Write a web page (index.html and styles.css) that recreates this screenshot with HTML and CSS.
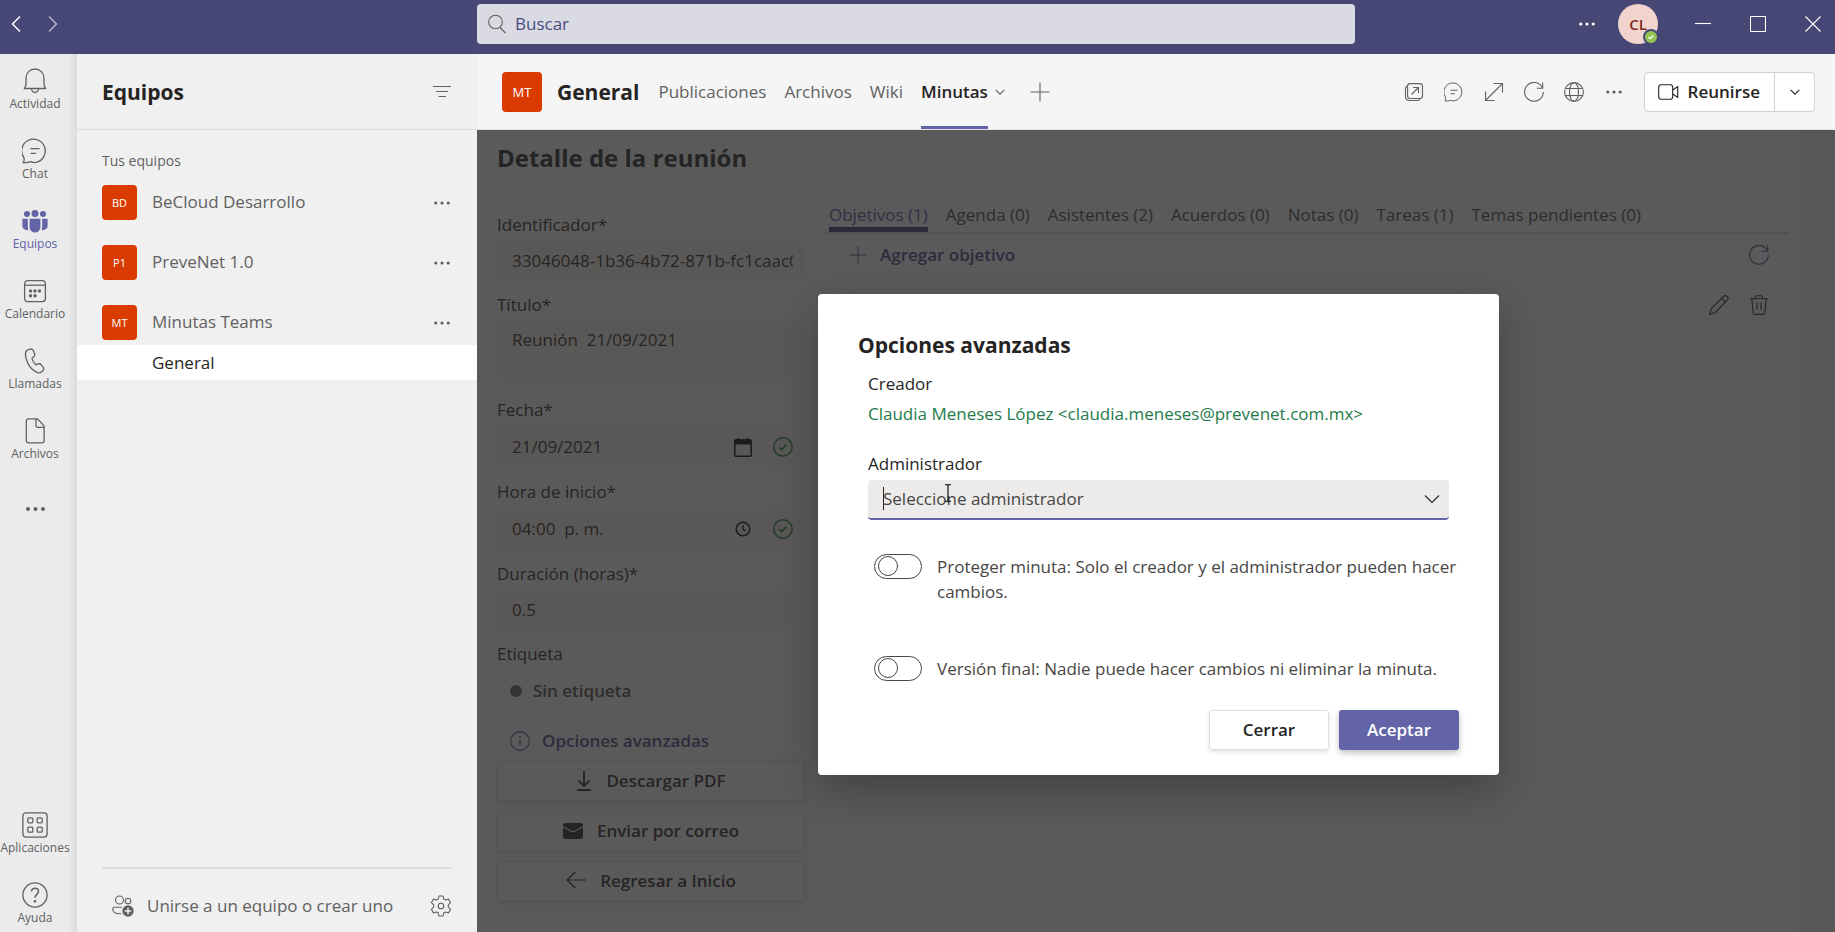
FILE: index.html
```html
<!DOCTYPE html>
<html lang="es">
<head>
<meta charset="utf-8">
<title>Minutas Teams</title>
<link rel="stylesheet" href="styles.css">
</head>
<body>
<svg class="sprite" aria-hidden="true">
  <symbol id="i-dots" viewBox="0 0 20 20"><g fill="currentColor" stroke="none"><circle cx="3.8" cy="10" r="1.6"/><circle cx="10" cy="10" r="1.6"/><circle cx="16.2" cy="10" r="1.6"/></g></symbol>
  <symbol id="i-chat" viewBox="0 0 26 26"><path d="M1.2 24.6c.9-1.300 1.100-3 .9-4.500A11.800 11.800 0 1 1 13.200 24.600a12 12 0 0 1-4.500-.9c-2.200.9-4.600 1.200-7.500.9zM8.500 10.700h9M8.500 15.300h5.500"/></symbol>
  <symbol id="i-refresh" viewBox="0 0 20 20"><path d="M18.600 6A9.400 9.400 0 1 0 19.400 10M18.700.5v5.700h-6"/></symbol>
  <symbol id="i-plus" viewBox="0 0 20 20"><path d="M10 .5v19M.5 10h19"/></symbol>
  <symbol id="i-chevron" viewBox="0 0 16 16"><path d="M1 4.500l7 7 7-7"/></symbol>
  <symbol id="i-check" viewBox="0 0 20 20"><circle cx="10" cy="10" r="9.200"/><path d="M6.300 10.300l2.500 2.300 4.700-5" stroke-width="1.800"/></symbol>
</svg>

<header class="titlebar">
  <nav class="history" aria-label="Historial">
    <button class="icon-btn" aria-label="Atrás"><svg class="ic" width="10" height="18" viewBox="0 0 10 18"><path d="M9 1.500L1.500 9 9 16.500" stroke-width="1.500"/></svg></button>
    <button class="icon-btn dim" aria-label="Adelante"><svg class="ic" width="10" height="18" viewBox="0 0 10 18"><path d="M1 1.500L8.500 9 1 16.500" stroke-width="1.300"/></svg></button>
  </nav>
  <label class="search">
    <svg class="ic" width="18" height="20" viewBox="0 0 18 20"><circle cx="7.500" cy="8" r="6.800"/><path d="M12 13.500l5.500 5.500"/></svg>
    <input type="text" placeholder="Buscar" aria-label="Buscar">
  </label>
  <div class="window-tools">
    <button class="icon-btn" aria-label="Más"><svg class="ic" width="20" height="20"><use href="#i-dots"/></svg></button>
    <div class="user">CL<span class="presence"><svg class="ic" width="8" height="8" viewBox="0 0 8 8"><path d="M1.500 4.200l1.700 1.500 3.200-3.200" stroke-width="1.300"/></svg></span></div>
    <button class="icon-btn" aria-label="Minimizar"><svg class="ic" width="16" height="16" viewBox="0 0 16 16"><path d="M0 7.500h16"/></svg></button>
    <button class="icon-btn" aria-label="Maximizar"><svg class="ic" width="16" height="16" viewBox="0 0 16 16"><path d="M.5.5h15v15H.5z"/></svg></button>
    <button class="icon-btn" aria-label="Cerrar ventana"><svg class="ic" width="16" height="16" viewBox="0 0 16 16"><path d="M.5.5l15 15M15.500.5l-15 15"/></svg></button>
  </div>
</header>

<div class="shell">
  <nav class="rail" aria-label="Aplicaciones">
    <a class="rail-item" href="#"><svg class="ic" width="26" height="26" viewBox="0 0 26 26"><path d="M2.500 20.500l1.500-3.500V10a9 9 0 0 1 18 0v7l1.500 3.500zM9.500 20.800a3.500 3.500 0 0 0 7 0"/></svg><span>Actividad</span></a>
    <a class="rail-item" href="#"><svg class="ic" width="26" height="26"><use href="#i-chat"/></svg><span>Chat</span></a>
    <a class="rail-item active" href="#"><svg class="ic" width="26" height="26" viewBox="0 0 26 26"><g fill="currentColor" stroke="none"><circle cx="13" cy="5.600" r="3.500"/><circle cx="5" cy="6" r="3"/><circle cx="21" cy="6" r="3"/><path d="M7.600 10.800h10.800v8.400a5.400 5.400 0 0 1-10.800 0z"/><path d="M.4 10.800h5.400v8c0 1.300.2 2.300.8 3.300C3 22.500.4 20.800.4 18zM25.600 10.800h-5.400v8c0 1.300-.2 2.300-.8 3.300 3.600.4 6.200-1.300 6.200-4.100z"/></g></svg><span>Equipos</span></a>
    <a class="rail-item" href="#"><svg class="ic" width="26" height="26" viewBox="0 0 26 26"><rect x="2.600" y="2.600" width="20.800" height="21" rx="3"/><path d="M2.600 7.200h20.800"/><g fill="currentColor" stroke="none"><circle cx="8.500" cy="13" r="1.700"/><circle cx="13" cy="13" r="1.700"/><circle cx="17.500" cy="13" r="1.700"/><circle cx="8.500" cy="17.700" r="1.700"/><circle cx="13" cy="17.700" r="1.700"/></g></svg><span>Calendario</span></a>
    <a class="rail-item" href="#"><svg class="ic" width="26" height="26" viewBox="0 0 26 26"><path d="M6.500 1.600l2-.5c1.300-.3 2.300.3 2.800 1.500l1.300 3.200c.4 1.100.1 2-.7 2.700l-2 1.900c.7 2.300 2 4.500 3.900 6.300l2.600-.8c1-.3 2 0 2.700.8l2.200 2.700c.8 1 .6 2.200-.3 3.100l-1.300 1.200c-1.300 1.200-3.300 1.500-5 .6C9.500 21.800 5.500 16.500 4 9.800 3 6 3.500 2.500 6.500 1.600z"/></svg><span>Llamadas</span></a>
    <a class="rail-item" href="#"><svg class="ic" width="26" height="26" viewBox="0 0 26 26"><path d="M6.500.9h9l6.600 7v14.600c0 1.500-.8 2.300-2.200 2.300H6.500c-1.400 0-2.200-.8-2.200-2.300V3.200C4.300 1.700 5.100.9 6.500.9zM14 1v6.800c0 1 .6 1.600 1.600 1.600H22"/></svg><span>Archivos</span></a>
    <a class="rail-item" href="#" aria-label="Más aplicaciones"><svg class="ic" width="25" height="42" viewBox="0 0 25 42"><g fill="currentColor" stroke="none"><circle cx="5" cy="21" r="2"/><circle cx="12.500" cy="21" r="2"/><circle cx="20" cy="21" r="2"/></g></svg></a>
    <a class="rail-item rail-bottom" href="#"><svg class="ic" width="26" height="26" viewBox="0 0 26 26"><rect x=".9" y=".9" width="24.200" height="24.200" rx="3"/><rect x="5.800" y="5.800" width="5" height="5" rx="1"/><rect x="15.200" y="5.800" width="5" height="5" rx="1"/><rect x="5.800" y="15.200" width="5" height="5" rx="1"/><rect x="15.200" y="15.200" width="5" height="5" rx="1"/></svg><span>Aplicaciones</span></a>
    <a class="rail-item" href="#"><svg class="ic" width="26" height="26" viewBox="0 0 26 26"><circle cx="13" cy="13" r="12.100"/><path d="M9.500 9.600c0-2 1.500-3.400 3.500-3.400s3.500 1.400 3.500 3.300c0 2.700-3.500 3.200-3.500 6.300" stroke-width="1.500"/><circle cx="13" cy="19.300" r="1.300" fill="currentColor" stroke="none"/></svg><span>Ayuda</span></a>
  </nav>

  <aside class="sidebar">
    <div class="sidebar-head">
      <h1>Equipos</h1>
      <button class="icon-btn" aria-label="Filtrar"><svg class="ic" width="18" height="14" viewBox="0 0 18 14"><path d="M0 1.500h18M3 6.500h12M5.500 11.500h7.500" stroke-width="1.200"/></svg></button>
    </div>
    <div class="sidebar-body">
      <p class="caption">Tus equipos</p>
      <div class="team"><span class="avatar">BD</span><span class="team-name">BeCloud Desarrollo</span><button class="icon-btn" aria-label="Más opciones"><svg class="ic" width="20" height="20"><use href="#i-dots"/></svg></button></div>
      <div class="team"><span class="avatar">P1</span><span class="team-name">PreveNet 1.0</span><button class="icon-btn" aria-label="Más opciones"><svg class="ic" width="20" height="20"><use href="#i-dots"/></svg></button></div>
      <div class="team"><span class="avatar">MT</span><span class="team-name">Minutas Teams</span><button class="icon-btn" aria-label="Más opciones"><svg class="ic" width="20" height="20"><use href="#i-dots"/></svg></button></div>
      <a class="channel" href="#">General</a>
    </div>
    <div class="sidebar-foot">
      <button class="join"><svg class="ic" width="22" height="22" viewBox="0 0 22 22"><circle cx="7.500" cy="5" r="4"/><circle cx="16" cy="6" r="2.800"/><path d="M9.500 18.800H8c-4.500 0-7.300-1.500-7.300-4.500 0-1.300.7-2 2-2h7"/><circle cx="16" cy="16" r="5.700" fill="currentColor" stroke="none"/><path d="M16 12.800v6.400M12.800 16h6.400" stroke="#f0f0f0" stroke-width="1.400"/></svg><span>Unirse a un equipo o crear uno</span></button>
      <button class="icon-btn" aria-label="Configuración"><svg class="ic" width="22" height="22" viewBox="0 0 22 22"><circle cx="11" cy="11" r="2.800"/><path d="M8.900 1h4.200l.6 3 1.900 1.100 2.900-1 2.100 3.600-2.300 2.100v2.400l2.300 2.100-2.100 3.600-2.900-1-1.900 1.100-.6 3H8.900l-.6-3-1.900-1.100-2.900 1-2.100-3.600 2.300-2.100V9.800L1.400 7.700l2.100-3.600 2.900 1L8.300 4z" stroke-linejoin="round"/></svg></button>
    </div>
  </aside>

  <main class="main">
    <div class="channel-head">
      <span class="avatar large">MT</span>
      <h2>General</h2>
      <nav class="channel-tabs">
        <a href="#">Publicaciones</a>
        <a href="#">Archivos</a>
        <a href="#">Wiki</a>
        <a href="#" class="active">Minutas</a>
      </nav>
      <button class="icon-btn tab-menu" aria-label="Opciones de pestaña"><svg class="ic chev" width="10" height="10"><use href="#i-chevron"/></svg></button>
      <button class="icon-btn" aria-label="Agregar pestaña"><svg class="ic" width="20" height="20"><use href="#i-plus"/></svg></button>
      <div class="channel-tools">
        <button class="icon-btn" aria-label="Abrir en ventana"><svg class="ic" width="20" height="20" viewBox="0 0 20 20"><rect x="3.600" y="1.600" width="14.900" height="14.900" rx="2.500"/><path d="M3.500 4C2 4.300 1.500 5.300 1.500 6.500v7.700c0 2.800 1.500 4.300 4.300 4.300h7.700c1.500 0 2.300-.7 2.700-2M7.500 12.500l7-7M9 5.500h5.500V11"/></svg></button>
        <button class="icon-btn" aria-label="Conversación"><svg class="ic chat-sm" width="20" height="20"><use href="#i-chat"/></svg></button>
        <button class="icon-btn" aria-label="Expandir"><svg class="ic" width="20" height="20" viewBox="0 0 20 20"><path d="M1.500 18.500l17-17M9.500 1.500h9v9M1.500 9.500v9h9"/></svg></button>
        <button class="icon-btn" aria-label="Actualizar"><svg class="ic" width="20" height="20"><use href="#i-refresh"/></svg></button>
        <button class="icon-btn" aria-label="Web"><svg class="ic" width="20" height="20" viewBox="0 0 20 20"><circle cx="10" cy="10" r="9.400"/><ellipse cx="10" cy="10" rx="4.500" ry="9.400"/><path d="M1.500 6.500h17M1.500 13.500h17"/></svg></button>
        <button class="icon-btn" aria-label="Más opciones"><svg class="ic" width="20" height="20"><use href="#i-dots"/></svg></button>
      </div>
      <div class="meet">
        <button class="meet-main"><svg class="ic" width="21" height="16" viewBox="0 0 21 16"><rect x=".7" y=".7" width="14" height="14.600" rx="2.500"/><path d="M14.700 6l5-3.500v11l-5-3.500"/></svg>Reunirse</button>
        <button class="meet-more" aria-label="Más opciones de reunión"><svg class="ic chev" width="10" height="10"><use href="#i-chevron"/></svg></button>
      </div>
    </div>

    <div class="stage">
      <section class="page">
        <h2>Detalle de la reunión</h2>
        <div class="columns">
          <form class="details">
            <div class="field"><label for="ident">Identificador*</label><div class="box"><input id="ident" type="text" value="33046048-1b36-4b72-871b-fc1caac0e5d7"></div></div>
            <div class="field title-field"><label for="titulo">Título*</label><textarea id="titulo">Reunión  21/09/2021</textarea></div>
            <div class="field"><label for="fecha">Fecha*</label><div class="box tall"><input id="fecha" type="text" value="21/09/2021"><svg class="ic solid" width="18" height="19" viewBox="0 0 18 19"><path d="M2 2h14a1.200 1.200 0 0 1 1.200 1.200V17a1.200 1.200 0 0 1-1.200 1.200H2A1.200 1.200 0 0 1 .8 17V3.200A1.200 1.200 0 0 1 2 2z" stroke-width="1.500"/><path d="M1 2h16v4H1z" fill="currentColor"/><path d="M4.300 0v2.500M13.700 0v2.500" stroke-width="2"/></svg><svg class="ic ok" width="20" height="20"><use href="#i-check"/></svg></div></div>
            <div class="field"><label for="hora">Hora de inicio*</label><div class="box tall"><input id="hora" type="text" value="04:00  p. m."><svg class="ic solid" width="18" height="16" viewBox="0 0 18 16"><circle cx="9" cy="8" r="6.800" stroke-width="1.500"/><path d="M9 4v4.300l2.800 2" stroke-width="1.300"/></svg><svg class="ic ok" width="20" height="20"><use href="#i-check"/></svg></div></div>
            <div class="field"><label for="dur">Duración (horas)*</label><div class="box"><input id="dur" type="text" value="0.5"></div></div>
            <div class="tag-title">Etiqueta</div>
            <button type="button" class="tag"><span class="dot"></span>Sin etiqueta</button>
            <button type="button" class="advanced"><svg class="ic" width="20" height="20" viewBox="0 0 20 20"><circle cx="10" cy="10" r="9.400"/><path d="M10 8.500v6" stroke-width="1.300"/><circle cx="10" cy="6" r="1" fill="currentColor" stroke="none"/></svg>Opciones avanzadas</button>
            <div class="actions">
              <button type="button"><svg class="ic" width="16" height="20" viewBox="0 0 16 20"><path d="M8 0v15M2.500 9.500L8 15l5.500-5.500M1 19h14" stroke-width="1.800"/></svg>Descargar PDF</button>
              <button type="button"><svg class="ic" width="20" height="18" viewBox="0 0 20 18"><path fill="currentColor" stroke="none" d="M2.500 1h15A2.500 2.500 0 0 1 20 3.500v.8l-10 5-10-5v-.8A2.500 2.500 0 0 1 2.500 1zM0 5.600l10 5 10-5v9a2.500 2.500 0 0 1-2.500 2.500h-15A2.500 2.500 0 0 1 0 14.600z"/></svg>Enviar por correo</button>
              <button type="button"><svg class="ic" width="20" height="20" viewBox="0 0 20 20"><path d="M20 9H1M9.500.8L1 9l8.500 8.200" stroke-width="1.200"/></svg>Regresar a Inicio</button>
            </div>
          </form>

          <div class="panel">
            <div class="panel-tabs" role="tablist">
              <button role="tab" class="active">Objetivos (1)</button>
              <button role="tab">Agenda (0)</button>
              <button role="tab">Asistentes (2)</button>
              <button role="tab">Acuerdos (0)</button>
              <button role="tab">Notas (0)</button>
              <button role="tab">Tareas (1)</button>
              <button role="tab">Temas pendientes (0)</button>
            </div>
            <div class="panel-bar">
              <button class="add"><svg class="ic" width="18" height="18"><use href="#i-plus"/></svg>Agregar objetivo</button>
              <button class="icon-btn violet" aria-label="Recargar objetivos"><svg class="ic" width="20" height="20"><use href="#i-refresh"/></svg></button>
            </div>
            <div class="row-tools">
              <button class="icon-btn" aria-label="Editar"><svg class="ic" width="20" height="20" viewBox="0 0 20 20"><path d="M.8 19.200l1.500-5.600L14.500 1.400c1-1 2.500-.9 3.500 0s1.400 2.500.5 3.500L6.300 17.500zM12.500 3.400l4 4"/></svg></button>
              <button class="icon-btn" aria-label="Eliminar"><svg class="ic" width="20" height="20" viewBox="0 0 20 20"><path d="M1 3.700h18M6.500 3.500V2c0-.8.500-1.300 1.300-1.300h4.400c.8 0 1.300.5 1.300 1.300v1.500M2.800 3.700l1.400 14c.1 1 .8 1.700 1.800 1.700h8c1 0 1.700-.7 1.800-1.700l1.400-14M8 7.500V15M12 7.500V15"/></svg></button>
            </div>
          </div>
        </div>
      </section>

      <div class="overlay">
        <section class="dialog" role="dialog" aria-labelledby="dlg-title">
          <h2 id="dlg-title">Opciones avanzadas</h2>
          <div class="dialog-body">
            <div class="dlg-label">Creador</div>
            <div class="creator">Claudia Meneses López &lt;claudia.meneses@prevenet.com.mx&gt;</div>
            <label class="dlg-label" for="admin">Administrador</label>
            <div class="combo">
              <input id="admin" type="text" role="combobox" aria-expanded="false" placeholder="Seleccione administrador">
              <svg class="ic" width="16" height="16"><use href="#i-chevron"/></svg>
              <span class="caret"></span>
              <svg class="ic pointer" width="8" height="18" viewBox="0 0 8 18"><path d="M1 .8h2.200q.8 0 .8.800v14.800q0 .8-.8.800H1M7 .8H4.800q-.8 0-.8.800M7 17.200H4.800q-.8 0-.8-.8"/></svg>
            </div>
            <div class="toggles">
              <label class="toggle"><input type="checkbox" role="switch"><span>Proteger minuta: Solo el creador y el administrador pueden hacer cambios.</span></label>
              <label class="toggle"><input type="checkbox" role="switch"><span>Versión final: Nadie puede hacer cambios ni eliminar la minuta.</span></label>
            </div>
          </div>
          <div class="dialog-actions">
            <button class="secondary">Cerrar</button>
            <button class="primary">Aceptar</button>
          </div>
        </section>
      </div>
    </div>
  </main>
</div>
</body>
</html>
```
FILE: styles.css
```css
* { box-sizing: border-box; }

body {
  margin: 0;
  height: 100vh;
  display: flex;
  flex-direction: column;
  overflow: hidden;
  font: 17px/24px "Segoe UI", "Open Sans", sans-serif;
  color: #252423;
}

h1, h2, p { margin: 0; }
button, input, textarea { font: inherit; color: inherit; }
button { padding: 0; border: 0; background: none; }
a { color: inherit; text-decoration: none; }
.sprite { position: absolute; width: 0; height: 0; }
.ic { flex: none; fill: none; stroke: currentColor; stroke-width: 1.100; }
.chev { stroke-width: 1.700; }
.icon-btn { display: flex; flex: none; align-items: center; justify-content: center; }

/* Title bar */
.titlebar {
  height: 54px;
  flex: none;
  display: grid;
  grid-template-columns: 477px minmax(200px, 878px) 1fr;
  align-items: start;
  padding-top: 4px;
  background: #464775;
  color: #fff;
}
.history { display: flex; gap: 27px; padding-left: 11px; height: 40px; align-items: center; }
.dim { opacity: .65; }
.search {
  display: flex;
  align-items: center;
  gap: 9px;
  height: 40px;
  padding: 0 11px;
  border-radius: 4px;
  background: #dadae3;
  color: #616161;
}
.search input { flex: 1; border: 0; padding: 0; background: none; outline: 0; }
.search input::placeholder { color: #494b83; opacity: 1; }
.window-tools { display: flex; align-items: center; justify-content: flex-end; height: 40px; padding-right: 14px; gap: 39px; }
.user {
  position: relative;
  display: flex;
  align-items: center;
  justify-content: center;
  width: 40px;
  height: 40px;
  margin: 0 -2px 0 -18px;
  border-radius: 50%;
  background: #f1d4cd;
  color: #7a2d1d;
  font-size: 15px;
  font-weight: 600;
}
.presence {
  position: absolute;
  right: -1px;
  bottom: -1px;
  display: flex;
  align-items: center;
  justify-content: center;
  width: 16px;
  height: 16px;
  border: 2px solid #464775;
  border-radius: 50%;
  background: #92c353;
  color: #fff;
}

/* App rail */
.shell { flex: 1; min-height: 0; display: flex; }
.rail {
  width: 77px;
  flex: none;
  display: flex;
  flex-direction: column;
  gap: 20px;
  padding: 14px 7px 0 0;
  background: linear-gradient(to left, #dcdcdc, #ebebeb 9px);
  color: #616161;
}
.rail-item {
  display: flex;
  flex-direction: column;
  align-items: center;
  height: 50px;
  font-size: 12px;
  line-height: 20px;
}
.rail-item .ic { stroke-width: 1.300; }
.rail-item.active { color: #6264a7; }
.rail-bottom { margin-top: auto; }

/* Teams list */
.sidebar {
  width: 400px;
  flex: none;
  display: flex;
  flex-direction: column;
  background: #f0f0f0;
  color: #616161;
}
.sidebar-head {
  display: flex;
  align-items: center;
  justify-content: space-between;
  height: 76px;
  padding: 0 26px 0 25px;
  border-bottom: 1px solid #dcdcdc;
}
.sidebar-head h1 { font-size: 21px; font-weight: 700; color: #252423; }
.caption { padding: 19px 25px 12px; font-size: 14px; }
.team { display: flex; align-items: center; height: 35px; margin-bottom: 25px; padding: 0 25px; }
.team:nth-last-child(2) { margin-bottom: 5px; }
.team-name { flex: 1; padding: 0 0 2px 15px; }
.avatar {
  display: flex;
  flex: none;
  align-items: center;
  justify-content: center;
  width: 35px;
  height: 35px;
  border-radius: 4px;
  background: #da3b01;
  color: #fff;
  font-size: 11px;
}
.avatar.large { width: 40px; height: 40px; font-size: 13px; }
.channel { display: block; padding-left: 75px; line-height: 35px; background: #fff; color: #252423; }
.sidebar-foot {
  display: flex;
  align-items: center;
  justify-content: space-between;
  height: 65px;
  margin: auto 25px 0;
  padding: 10px 0 0 10px;
  border-top: 2px solid #dedede;
}
.join { display: flex; align-items: center; gap: 13px; }

/* Channel header */
.main { flex: 1; min-width: 0; display: flex; flex-direction: column; }
.channel-head {
  display: flex;
  align-items: center;
  flex: none;
  height: 76px;
  padding: 0 20px 0 25px;
  border-bottom: 1px solid #e1e1e1;
  background: #f5f5f5;
  color: #616161;
}
.channel-head h2 { margin-left: 15px; font-size: 21px; font-weight: 700; color: #252423; }
.channel-tabs { align-self: stretch; display: flex; gap: 18px; margin-left: 19px; }
.channel-tabs a { line-height: 76px; white-space: nowrap; border-bottom: 3px solid transparent; }
.channel-tabs .active { font-weight: 600; color: #252423; border-color: #6264a7; }
.tab-menu { margin: 0 25px 0 7px; }
.channel-tools { display: flex; gap: 20px; margin-left: auto; }
.chat-sm { stroke-width: 1.300; }
.meet {
  display: flex;
  height: 40px;
  margin-left: 20px;
  border: 1px solid #d1d1d1;
  border-radius: 4px;
  background: #fff;
  color: #252423;
}
.meet-main { display: flex; align-items: center; gap: 9px; padding: 0 14px 0 13px; font-weight: 600; }
.meet-more { display: flex; align-items: center; justify-content: center; width: 40px; border-left: 1px solid #d1d1d1; }

/* Meeting page */
.stage { position: relative; flex: 1; min-height: 0; overflow: hidden; background: #ececec; }
.page { min-height: 100%; margin-right: 36px; padding: 12px 10px 30px 20px; background: #f5f5f5; }
.page h2 { margin-bottom: 28px; font-size: 24px; line-height: 32px; font-weight: 700; }
.columns { display: flex; gap: 20px; }
.details { width: 308px; flex: none; padding-top: 11px; }
.field { display: flex; flex-direction: column; gap: 4px; margin-bottom: 12px; }
.title-field { margin-bottom: 17px; }
.box { display: flex; align-items: center; height: 40px; padding: 0 12px 0 15px; border-radius: 4px; background: #f3efe9; }
.box.tall { height: 42px; }
.box input { flex: 1; min-width: 0; padding: 0; border: 0; background: none; white-space: pre; }
.details textarea { display: block; height: 60px; padding: 7px 15px; border: 0; border-radius: 4px; background: #f3efe9; resize: none; }
.solid { color: #000; }
.ok { margin-left: 21px; color: #237b4b; stroke-width: 1.500; }
.tag { display: flex; align-items: center; gap: 11px; margin: 13px 0 26px 13px; font-weight: 600; color: #484644; }
.tag-title { color: #252423; }
.dot { width: 12px; height: 12px; border-radius: 50%; background: #605e5c; }
.advanced { display: flex; align-items: center; gap: 12px; margin: 0 0 8px 13px; font-weight: 600; color: #4b3f86; }
.actions { display: flex; flex-direction: column; gap: 10px; }
.actions button {
  display: flex;
  align-items: center;
  justify-content: center;
  gap: 14px;
  height: 40px;
  border: 1px solid #dcdad8;
  border-radius: 3px;
  box-shadow: 0 3px 6px rgba(0, 0, 0, .1);
  font-weight: 600;
}
.panel { flex: 1; min-width: 0; }
.panel-tabs { display: flex; gap: 18px; padding-left: 4px; border-bottom: 2px solid #d8d6d4; }
.panel-tabs button { height: 30px; white-space: nowrap; color: #484644; border-bottom: 5px solid transparent; }
.panel-tabs .active { color: #5c4fa0; border-color: #3f3670; }
.panel-bar { display: flex; align-items: center; justify-content: space-between; height: 42px; padding: 0 20px 0 24px; }
.add { display: flex; align-items: center; gap: 13px; font-weight: 600; color: #4b3f86; }
.violet { color: #4b3f86; }
.row-tools { display: flex; justify-content: flex-end; gap: 20px; margin-top: 19px; padding-right: 20px; }

/* Advanced options dialog */
.overlay {
  position: absolute;
  inset: 0;
  display: flex;
  align-items: center;
  justify-content: center;
  padding: 6px 0 0 5px;
  background: rgba(37, 36, 36, .745);
}
.dialog {
  width: 681px;
  padding: 36px 40px 25px;
  border-radius: 4px;
  background: #fff;
  box-shadow: 0 16px 40px rgba(0, 0, 0, .25);
}
.dialog h2 { font-size: 21px; line-height: 30px; font-weight: 700; }
.dialog-body { padding: 12px 10px 0; }
.dlg-label { display: block; }
.creator { margin: 6px 0 26px; color: #237b4b; }
.combo {
  position: relative;
  display: flex;
  align-items: center;
  height: 40px;
  margin-top: 4px;
  padding: 0 9px 0 15px;
  border-bottom: 2px solid #6264a7;
  border-radius: 4px;
  background: #ecebe9;
}
.combo input { flex: 1; padding: 0; border: 0; outline: 0; background: none; }
.combo input::placeholder { color: #484644; opacity: 1; }
.caret { position: absolute; left: 15px; top: 7px; width: 1px; height: 23px; background: #252423; }
.pointer { position: absolute; left: 76px; top: 4px; color: #000; }
.toggles { display: flex; flex-direction: column; gap: 52px; margin: 34px -10px 0 6px; }
.toggle { display: flex; align-items: flex-start; gap: 15px; line-height: 25px; color: #484644; }
.toggle input {
  appearance: none;
  display: flex;
  align-items: center;
  flex: none;
  width: 48px;
  height: 25px;
  margin: 0;
  padding-left: 3px;
  border: 1px solid #484644;
  border-radius: 13px;
}
.toggle input::before { content: ""; width: 18px; height: 18px; border: 1px solid #484644; border-radius: 50%; }
.dialog-actions { display: flex; justify-content: flex-end; gap: 10px; margin-top: 29px; }
.dialog-actions button { width: 120px; height: 40px; border-radius: 3px; font-weight: 600; }
.secondary { border: 1px solid #e1dfdd; box-shadow: 0 2px 4px rgba(0, 0, 0, .12); }
.primary { background: #6264a7; color: #fff; box-shadow: 0 3px 6px rgba(0, 0, 0, .25); }
```
